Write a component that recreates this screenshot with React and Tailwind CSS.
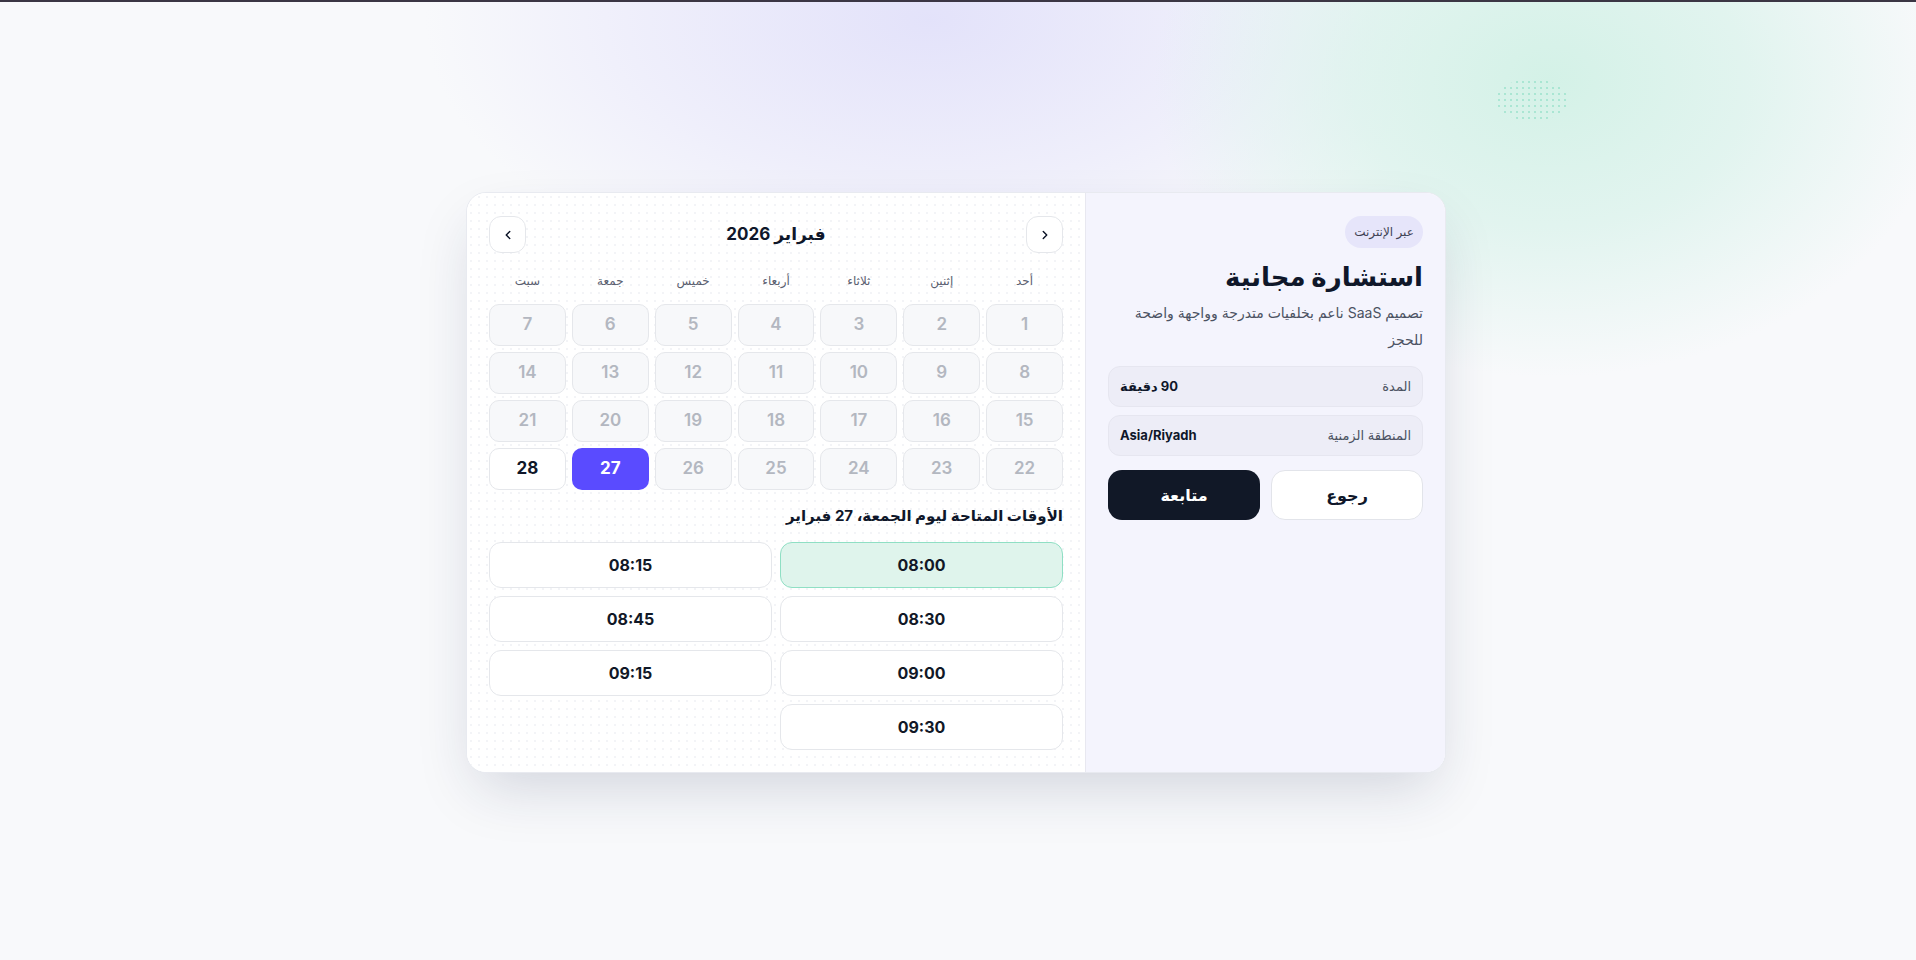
import { ChevronLeft, ChevronRight } from "lucide-react";

const dayNames = ["أحد", "إثنين", "ثلاثاء", "أربعاء", "خميس", "جمعة", "سبت"];
const days = Array.from({ length: 28 }, (_, i) => i + 1);
const slots = ["08:00", "08:15", "08:30", "08:45", "09:00", "09:15", "09:30"];

const font = { fontFamily: 'Inter, "DejaVu Sans", sans-serif' };

const DayCell = ({ day }) => {
  if (day === 27) {
    return (
      <button className="h-[42px] rounded-[10px] bg-[#5a4bff] text-[17px] font-bold text-white">
        {day}
      </button>
    );
  }
  if (day === 28) {
    return (
      <button className="h-[42px] rounded-[10px] border border-[#e5e7eb] bg-white text-[17px] font-bold text-[#0f172a]">
        {day}
      </button>
    );
  }
  return (
    <button className="h-[42px] rounded-[10px] border border-[#e5e7eb] bg-[#f7f8fa] text-[17px] font-semibold text-[#b3b7c0]">
      {day}
    </button>
  );
};

const InfoPanel = () => (
  <div className="flex w-[360px] shrink-0 flex-col border-l border-[#e8e8f0] bg-[#f4f4fd] px-[22px] pt-[23px]">
    <div className="flex">
      <span className="flex h-8 w-[78px] items-center justify-center rounded-full bg-[#e6e5fa] text-[12px] text-[#3f4354]">
        عبر الإنترنت
      </span>
    </div>
    <h1 className="mt-[11px] text-[26px] font-extrabold leading-9 text-[#0f172a]">
      استشارة مجانية
    </h1>
    <p className="mt-[4px] text-[14px] leading-[27px] text-[#4b5262]">
      تصميم SaaS ناعم بخلفيات متدرجة وواجهة واضحة للحجز
    </p>
    <div className="mt-[13px] flex flex-col gap-2">
      <div className="flex h-[41px] items-center justify-between rounded-xl border border-[#e6e6f0] bg-[#ededf7] px-[11px]">
        <span className="text-[13px] text-[#4b5262]">المدة</span>
        <span className="text-[13px] font-bold text-[#0f172a]">90 دقيقة</span>
      </div>
      <div className="flex h-[41px] items-center justify-between rounded-xl border border-[#e6e6f0] bg-[#ededf7] px-[11px]">
        <span className="text-[13px] text-[#4b5262]">المنطقة الزمنية</span>
        <span className="text-[13px] font-bold text-[#0f172a]" dir="ltr">
          Asia/Riyadh
        </span>
      </div>
    </div>
    <div className="mt-[14px] grid grid-cols-2 gap-[11px]">
      <button className="h-[50px] rounded-[14px] border border-[#e2e4ea] bg-white text-[16px] font-bold text-[#0f172a]">
        رجوع
      </button>
      <button className="h-[50px] rounded-[14px] bg-[#111827] text-[16px] font-bold text-white">
        متابعة
      </button>
    </div>
  </div>
);

const CalendarPanel = () => (
  <div className="flex flex-1 flex-col bg-white bg-[radial-gradient(#f3f4f7_1px,transparent_1px)] bg-[length:8px_8px] px-[22px] pb-[22px] pt-[23px]">
    <div className="flex items-center justify-between">
      <button className="flex h-[37px] w-[37px] items-center justify-center rounded-xl border border-[#e5e7eb] bg-white text-[#0f172a]">
        <ChevronRight size={14} strokeWidth={2.5} />
      </button>
      <div className="text-[17px] font-bold text-[#0f172a]">فبراير 2026</div>
      <button className="flex h-[37px] w-[37px] items-center justify-center rounded-xl border border-[#e5e7eb] bg-white text-[#0f172a]">
        <ChevronLeft size={14} strokeWidth={2.5} />
      </button>
    </div>
    <div className="mb-[13px] mt-[18px] grid h-5 grid-cols-7 gap-1.5">
      {dayNames.map((d) => (
        <div key={d} className="flex items-center justify-center text-[12px] text-[#5b6070]">
          {d}
        </div>
      ))}
    </div>
    <div className="grid grid-cols-7 gap-1.5">
      {days.map((d) => (
        <DayCell key={d} day={d} />
      ))}
    </div>
    <h2 className="mt-[14px] text-[15px] font-bold leading-6 text-[#0f172a]">
      الأوقات المتاحة ليوم الجمعة، 27 فبراير
    </h2>
    <div className="mt-[14px] grid grid-cols-2 gap-2">
      {slots.map((s) =>
        s === "08:00" ? (
          <button
            key={s}
            className="h-[46px] rounded-xl border border-[#8fdfc4] bg-[#dff4ec] text-[16px] font-bold text-[#111827]"
          >
            {s}
          </button>
        ) : (
          <button
            key={s}
            className="h-[46px] rounded-xl border border-[#e5e7eb] bg-white text-[16px] font-bold text-[#111827]"
          >
            {s}
          </button>
        )
      )}
    </div>
  </div>
);

export default function App() {
  return (
    <div className="relative min-h-screen overflow-hidden bg-[#f8f9fb]" style={font}>
      <div className="absolute inset-x-0 top-0 z-10 h-[2px] bg-[#3b3644]" />
      <div className="pointer-events-none absolute left-[420px] top-[-260px] h-[560px] w-[1020px] rounded-full bg-[radial-gradient(ellipse_at_center,rgba(226,225,250,0.95)_0%,rgba(232,231,251,0.6)_40%,transparent_70%)]" />
      <div className="pointer-events-none absolute left-[1150px] top-[-220px] h-[600px] w-[800px] rounded-full bg-[radial-gradient(ellipse_at_center,rgba(210,241,230,0.95)_0%,rgba(216,242,234,0.7)_35%,transparent_70%)]" />
      <div className="pointer-events-none absolute left-[1496px] top-[79px] h-[42px] w-[72px] rounded-[50%] bg-[radial-gradient(#7fdcbf_1px,transparent_1.2px)] bg-[length:6px_6px] opacity-50" />
      <div className="relative flex min-h-screen items-center justify-center pr-[4px] pt-[5px]">
        <div
          dir="rtl"
          className="flex w-[980px] overflow-hidden rounded-[20px] border border-[#e8eaf0] bg-white shadow-[0_24px_60px_-12px_rgba(30,41,80,0.18)]"
        >
          <InfoPanel />
          <CalendarPanel />
        </div>
      </div>
    </div>
  );
}
